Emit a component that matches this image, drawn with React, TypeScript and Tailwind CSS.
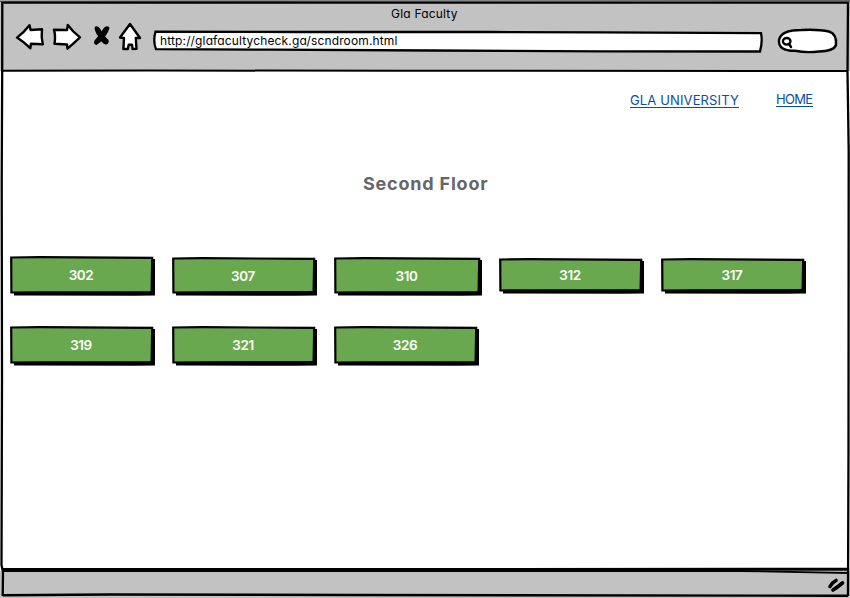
import React from "react";

type Room = { id: string; width: string; height: string };

const FIRST_ROW: Room[] = [
  { id: "302", width: "w-[145px]", height: "mt-0 h-[40px]" },
  { id: "307", width: "w-[145px]", height: "mt-px h-[39px]" },
  { id: "310", width: "w-[148px]", height: "mt-px h-[39px]" },
  { id: "312", width: "w-[145px]", height: "mt-[2px] h-[36px]" },
  { id: "317", width: "w-[145px]", height: "mt-[2px] h-[36px]" },
];

const SECOND_ROW: Room[] = [
  { id: "319", width: "w-[145px]", height: "h-[40px]" },
  { id: "321", width: "w-[145px]", height: "h-[40px]" },
  { id: "326", width: "w-[145px]", height: "h-[40px]" },
];

function RoomButton({ room }: { room: Room }) {
  const w = Number(room.width.slice(3, 6));
  const h = Number(room.height.slice(-5, -3));
  return (
    <button className={`relative flex items-center justify-center pr-[3px] pb-px text-[13.5px] font-semibold tracking-[-0.4px] text-white ${room.width} ${room.height}`}>
      <svg className="absolute inset-0" width={w} height={h} viewBox={`0 0 ${w} ${h}`}>
        <path d={`M4 4 L${w} 3 L${w} ${h - 0.5} L${w - 20} ${h - 0.2} L4 ${h - 0.5}Z`} fill="#000" />
        <path
          d={`M1.2 1.5 L30 1.2 L${w - 2.8} 1.8 L${w - 3.4} ${h - 4} L30 ${h - 3.7} L1.4 ${h - 3.5}Z`}
          fill="#6aa84f"
          stroke="#000"
          strokeWidth="2.2"
        />
      </svg>
      <span className="relative">{room.id}</span>
    </button>
  );
}

function RoomRow({ rooms }: { rooms: Room[] }) {
  return (
    <div className="flex h-[40px] items-start gap-[17px]">
      {rooms.map((room) => (
        <RoomButton key={room.id} room={room} />
      ))}
    </div>
  );
}

function NavIcons() {
  return (
    <svg width="130" height="34" viewBox="14 20 130 34" fill="#fff" stroke="#000" strokeWidth="2.4" strokeLinejoin="round" strokeLinecap="round">
      <path d="M17 37.6 Q24 32.5 29.5 25.3 L30.6 30 L42 29.3 Q41 37 42.8 44.3 L31 43.8 L30.3 48.2 Q24 42 17 37.6Z" />
      <path d="M80 37.4 Q73 32 67.8 25 L67 30 L54 29.8 Q55.8 36 54.5 43.8 L67 44.5 L67.5 48.7 Q73 44 80 37.4Z" />
      <g fill="#000" stroke="none">
        <path d="M94.8 26.8 Q97.5 25 100 28.5 Q104 36 108.5 40 Q109.5 43.5 106 44.6 Q102 44 98.5 37 Q94 31 94.8 26.8Z" />
        <path d="M109.5 27.5 Q106.5 25 103.8 28 Q99 36 94.3 40.8 Q93.3 44.5 96.5 45 Q100.5 43 104 38 Q109 31.5 109.5 27.5Z" />
      </g>
      <path d="M130 24 L120 37.5 L124 38 L123.4 49 L127.8 49 L128.7 44.7 L132 44.7 L132.6 49 L136.5 48.8 L135.8 38 L140 38Z" />
    </svg>
  );
}

function WindowHeader() {
  return (
    <header className="h-[71px] bg-[#c2c2c2] pt-[5px]">
      <h1 className="ml-[391px] h-4 pt-px text-[12px] leading-4 tracking-[0.2px] whitespace-nowrap">Gla Faculty</h1>
      <div className="-mt-px flex h-[34px] items-start pl-[14px]">
        <NavIcons />
        <div className="relative mt-[10px] ml-[8px] h-[23px] w-[612px]">
          <svg className="absolute inset-0" width="612" height="23" viewBox="152 30 612 23">
            <path d="M155.5 31.6 L300 32 L490 32 L600 32.4 L761 33.2 Q762.8 41 760 51.5 L600 51.3 L430 50.5 L270 49.7 L156 49.2 Q152.8 41 155.5 31.6Z" fill="#fff" stroke="#000" strokeWidth="2.3" />
          </svg>
          <span className="relative ml-[8px] block pt-[3px] text-[12px] leading-4 tracking-[0.14px] whitespace-nowrap">
            http://glafacultycheck.ga/scndroom.html
          </span>
        </div>
        <svg className="mt-[7px] ml-[12px]" width="64" height="28" viewBox="776 27 64 28">
          <path d="M779 40 Q781 30 801 30 Q818 29 829 31.5 Q837 34 836 45 Q834 51 819 51.5 Q806 53 795 50.8 Q778 51 779 40Z" fill="#fff" stroke="#000" strokeWidth="2.4" />
          <ellipse cx="786.7" cy="41.3" rx="3.8" ry="3.3" fill="#fff" stroke="#000" strokeWidth="2.3" />
          <path d="M789 44 L791 47" fill="none" stroke="#000" strokeWidth="2.5" strokeLinecap="round" />
        </svg>
      </div>
    </header>
  );
}

function WindowOutline() {
  return (
    <svg className="pointer-events-none absolute inset-0" width="850" height="598" viewBox="0 0 850 598" fill="none" stroke="#000">
      <path d="M0 1.4 L850 1" stroke="#454a46" strokeWidth="1.4" />
      <path d="M2 2.8 L400 2.7 L848.5 2.8" strokeWidth="2" />
      <path d="M2.3 2 L2.2 70 L1.7 180 L2 380 L1.5 565 L3 572 L2.7 596" strokeWidth="2.3" />
      <path d="M848 2 L847.5 72 L848.7 150 L848.5 450 L848 596" strokeWidth="2.3" />
      <path d="M2 70.7 L150 70.5 L400 70.8 L848 71" strokeWidth="2" />
      <path d="M2 569.6 L500 569.6 L848 569.3" strokeWidth="3" />
      <path d="M2 571 L740 571 L848 573" strokeWidth="1.8" />
      <path d="M3 595.3 L110 594.5 L350 595 L848 595.7" strokeWidth="2.4" />
      <path d="M830 586.5 Q832 582.5 836 580.5 M833 590 Q837 587.5 842.5 583" strokeWidth="3.6" strokeLinecap="round" />
    </svg>
  );
}

export default function App() {
  return (
    <div className="relative flex h-[598px] w-[850px] flex-col overflow-hidden bg-white font-['Inter',sans-serif] text-black [font-feature-settings:'cv11']">
      <WindowHeader />
      <main className="flex-1 pl-[10px]">
        <nav className="flex h-[50px] items-start pt-[20px] pl-[620px] text-[13px] leading-4 text-[#0b4f96]">
          <a className="mt-px h-[16px] w-[109px] border-b border-[#0b4f96] tracking-[0.13px] whitespace-nowrap">GLA UNIVERSITY</a>
          <a className="ml-[37px] h-[16px] w-[37px] border-b border-[#0b4f96] tracking-[-0.7px] whitespace-nowrap">HOME</a>
        </nav>
        <h2 className="mt-[50px] ml-[353px] h-6 pt-px text-[18px] leading-6 font-bold tracking-[0.8px] whitespace-nowrap text-[#666]">Second Floor</h2>
        <section className="mt-[61px] flex flex-col gap-[30px]">
          <RoomRow rooms={FIRST_ROW} />
          <RoomRow rooms={SECOND_ROW} />
        </section>
      </main>
      <footer className="h-[27px] bg-[#c2c2c2]" />
      <WindowOutline />
    </div>
  );
}
